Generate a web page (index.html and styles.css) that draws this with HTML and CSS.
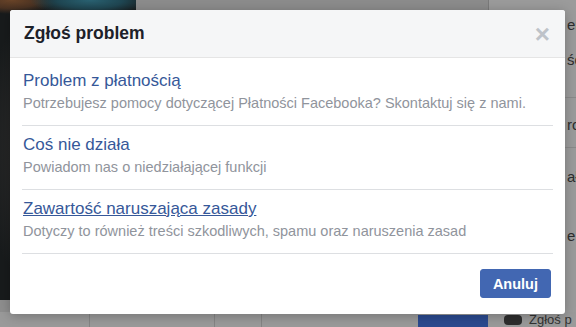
FILE: index.html
```html
<!DOCTYPE html>
<html lang="pl">
<head>
    <meta charset="UTF-8">
    <meta name="viewport" content="width=device-width, initial-scale=1.0">
    <title>Zgłoś problem</title>
    <link rel="stylesheet" href="styles.css">
</head>
<body>

    <!-- Strona pod nakładką -->
    <div class="backdrop">
        <div class="stage">
            <div class="cover"></div>
            <div class="feed"></div>
            <div class="side">
                <div class="side-line l1">eń</div>
                <div class="side-line l2">ść</div>
                <div class="side-sep s1"></div>
                <div class="side-line l3">ro</div>
                <div class="side-sep s2"></div>
                <div class="side-line l4">ał</div>
                <div class="side-line l5">e w</div>
            </div>
        </div>
        <div class="tabs">
            <span class="tab t1"></span>
            <span class="tab t2"></span>
            <span class="tab t3"></span>
            <span class="tab t4"></span>
            <span class="tab-btn"></span>
            <span class="tab-side"><i class="dot"></i>Zgłoś p</span>
        </div>
    </div>

    <!-- Okno dialogowe -->
    <div class="dialog">
        <div class="dialog-header">
            <h2>Zgłoś problem</h2>
            <span class="close">&times;</span>
        </div>
        <div class="dialog-body">
            <div class="option">
                <a href="#">Problem z płatnością</a>
                <p>Potrzebujesz pomocy dotyczącej Płatności Facebooka? Skontaktuj się z nami.</p>
            </div>
            <div class="option">
                <a href="#">Coś nie działa</a>
                <p>Powiadom nas o niedziałającej funkcji</p>
            </div>
            <div class="option">
                <a href="#" class="hover">Zawartość naruszająca zasady</a>
                <p>Dotyczy to również treści szkodliwych, spamu oraz naruszenia zasad</p>
            </div>
        </div>
        <div class="dialog-footer">
            <button type="button">Anuluj</button>
        </div>
    </div>

</body>
</html>
```

FILE: styles.css
```css
body {
    font-family: "Liberation Sans", Arial, sans-serif;
    margin: 0;
    width: 576px;
    height: 327px;
    overflow: hidden;
    background-color: #8e8e8e;
}
/* Tło strony (przyciemnione) */
.backdrop {
    display: flex;
    flex-direction: column;
    height: 327px;
}
.stage {
    display: flex;
    height: 314px;
}
.cover {
    width: 136px;
    height: 300px;
    flex-shrink: 0;
    background:
        radial-gradient(ellipse 60px 16px at 90px 0, #2a6272 0%, #1f4652 55%, transparent 100%),
        radial-gradient(ellipse 45px 14px at 12px 0, #6a4428 0%, #4a3222 60%, transparent 100%),
        radial-gradient(ellipse 90px 160px at 70px 150px, #45403a 0%, #2a2a2a 55%, #181b1c 100%);
}
.feed {
    flex: 1;
    background-color: #8c8c8c;
}
.side {
    width: 88px;
    flex-shrink: 0;
    box-sizing: border-box;
    padding-left: 78px;
    border-left: 1px solid #7a7a7a;
    background-color: #9b9b9b;
    overflow: hidden;
    font-size: 15px;
    color: #2e2e2e;
    white-space: nowrap;
}
.side-line {
    height: 18px;
    line-height: 18px;
}
.l1 { margin-top: 16px; }
.l2 { margin-top: 17px; }
.l3 { margin-top: 18px; }
.l4 { margin-top: 20px; }
.l5 { margin-top: 41px; }
.side-sep {
    height: 1px;
    margin-left: -78px;
    background-color: #8a8a8a;
}
.s1 { margin-top: 28px; }
.s2 { margin-top: 13px; }
.tabs {
    display: flex;
    flex: 1;
    background-color: #9a9a9a;
}
.tab {
    flex-shrink: 0;
    border-right: 1px solid #858585;
}
.t1 { width: 89px; }
.t2 { width: 124px; }
.t3 { width: 46px; }
.t4 { width: 156px; border-right: none; }
.tab-btn {
    width: 70px;
    flex-shrink: 0;
    margin-top: 3px;
    background-color: #2b4a8f;
}
.tab-side {
    display: flex;
    align-items: center;
    flex: 1;
    min-width: 0;
    gap: 7px;
    padding-left: 16px;
    overflow: hidden;
    font-size: 13px;
    color: #333;
    white-space: nowrap;
}
.dot {
    flex-shrink: 0;
    width: 18px;
    height: 10px;
    border-radius: 4px;
    background-color: #2e2e2e;
}

/* Okno dialogowe */
.dialog {
    position: absolute;
    left: 10px;
    top: 10px;
    width: 555px;
    height: 304px;
    background-color: #fff;
    border-radius: 3px;
    box-shadow: 0 2px 12px rgba(0,0,0,0.25);
    overflow: hidden;
}
.dialog-header {
    display: flex;
    align-items: center;
    justify-content: space-between;
    height: 47px;
    padding: 0 15px 0 14px;
    background-color: #f5f6f7;
    border-bottom: 1px solid #e5e5e5;
}
.dialog-header h2 {
    margin: 0;
    font-size: 17.5px;
    font-weight: bold;
    color: #1d2129;
}
.close {
    font-size: 26px;
    line-height: 20px;
    font-weight: bold;
    color: #bec3c9;
}
.dialog-body {
    padding: 4px 12px 0 12px;
}
.option {
    padding: 8px 0 12px 1px;
    border-bottom: 1px solid #dddfe2;
}
.option a {
    display: block;
    width: max-content;
    font-size: 17px;
    line-height: 22px;
    margin-bottom: 1px;
    color: #365899;
    text-decoration: none;
}
.option a.hover {
    text-decoration: underline;
}
.option p {
    margin: 0;
    font-size: 14.5px;
    line-height: 20px;
    color: #90949c;
}
.dialog-footer {
    display: flex;
    justify-content: flex-end;
    padding: 15px 14px 0 0;
}
button {
    height: 29px;
    padding: 0 12px;
    background-color: #4267b2;
    border: 1px solid #4267b2;
    border-radius: 3px;
    color: #fff;
    font-family: "Liberation Sans", Arial, sans-serif;
    font-size: 14.5px;
    font-weight: bold;
    cursor: pointer;
}
```
